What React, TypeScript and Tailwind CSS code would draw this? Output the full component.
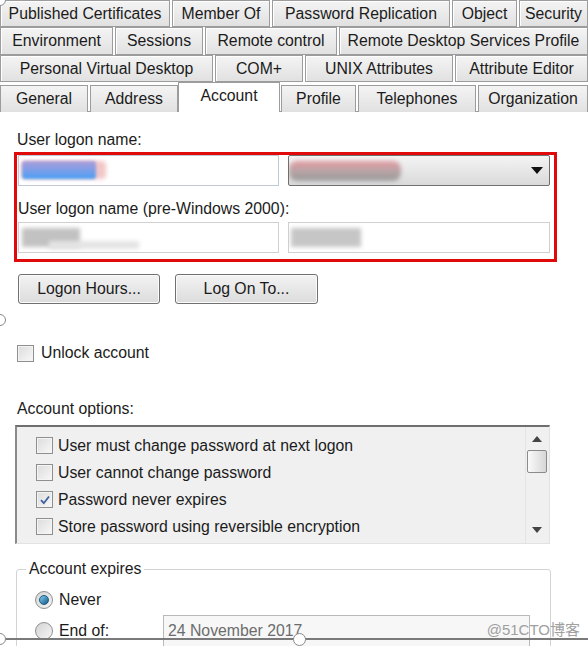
const font = { fontFamily: '"Liberation Sans", Arial, "Noto Sans CJK SC", sans-serif' };

const tabRows = [
  [
    { label: "Published Certificates", w: "w-[170px]" },
    { label: "Member Of", w: "w-[98px]" },
    { label: "Password Replication", w: "w-[178px]" },
    { label: "Object", w: "w-[65px]" },
    { label: "Security", w: "flex-1" },
  ],
  [
    { label: "Environment", w: "w-[113px]" },
    { label: "Sessions", w: "w-[88px]" },
    { label: "Remote control", w: "w-[132px]" },
    { label: "Remote Desktop Services Profile", w: "flex-1" },
  ],
  [
    { label: "Personal Virtual Desktop", w: "w-[213px]" },
    { label: "COM+", w: "w-[88px]" },
    { label: "UNIX Attributes", w: "w-[148px]" },
    { label: "Attribute Editor", w: "flex-1" },
  ],
];

const options = [
  { label: "User must change password at next logon", checked: false },
  { label: "User cannot change password", checked: false },
  { label: "Password never expires", checked: true },
  { label: "Store password using reversible encryption", checked: false },
];

function Tab({ label, w }: { label: string; w: string }) {
  return (
    <div
      className={`${w} flex h-full items-center justify-center border border-[#9c9c9c] bg-linear-to-b from-[#f4f4f4] to-[#e1e1e1] text-[15.8px] text-[#1b1b1b] whitespace-nowrap shadow-[inset_1px_1px_0_#ffffff]`}
    >
      {label}
    </div>
  );
}

function Checkbox({ checked }: { checked?: boolean }) {
  return (
    <div className="flex size-[17px] shrink-0 items-center justify-center border border-[#8e8f8f] bg-linear-to-br from-[#dcdcdc] to-[#f8f8f8] shadow-[inset_0_0_0_1px_#f4f4f4]">
      {checked && (
        <svg width="12" height="12" viewBox="0 0 12 12">
          <path d="M2 6.2 L4.8 9.2 L10 2.5" fill="none" stroke="#3c5fa0" strokeWidth="1.8" />
        </svg>
      )}
    </div>
  );
}

function Radio({ checked }: { checked?: boolean }) {
  return (
    <div className="flex size-[18px] shrink-0 items-center justify-center rounded-full border border-[#8e8f8f] bg-linear-to-br from-[#d4d4d4] to-[#f6f6f6]">
      {checked && (
        <div className="size-[10px] rounded-full border border-[#1d5a80] bg-linear-to-br from-[#7fd0f0] to-[#11598a]" />
      )}
    </div>
  );
}

function Button({ label, w }: { label: string; w: string }) {
  return (
    <div
      className={`${w} flex h-[30px] items-center justify-center rounded-[3px] border border-[#707070] bg-linear-to-b from-[#f3f3f3] to-[#dcdcdc] text-[15.8px] text-[#1b1b1b] shadow-[inset_0_0_0_1px_#fbfbfb]`}
    >
      {label}
    </div>
  );
}

export default function App() {
  return (
    <div className="relative h-[646px] w-[588px] overflow-hidden bg-white text-[#1b1b1b]" style={font}>
      {/* tab strip */}
      <div className="flex flex-col">
        {tabRows.map((row, i) => (
          <div key={i} className={`flex gap-[2px] ${i === 1 ? "h-[28px]" : "h-[27px]"}`}>
            {row.map((t) => (
              <Tab key={t.label} label={t.label} w={t.w} />
            ))}
          </div>
        ))}
        <div className="relative z-10 -mb-px flex h-[30px] items-end text-[15.8px]">
          <div className="h-[27px] w-[88px] border border-b-0 border-[#9c9c9c] bg-linear-to-b from-[#f4f4f4] to-[#e1e1e1] text-center leading-[25px]">
            General
          </div>
          <div className="ml-[2px] h-[27px] w-[88px] border border-b-0 border-[#9c9c9c] bg-linear-to-b from-[#f4f4f4] to-[#e1e1e1] text-center leading-[25px]">
            Address
          </div>
          <div className="h-[30px] w-[102px] border border-b-0 border-[#9c9c9c] bg-white pt-[2px] text-center leading-[22px]">
            Account
          </div>
          <div className="ml-px h-[27px] w-[75px] border border-b-0 border-[#9c9c9c] bg-linear-to-b from-[#f4f4f4] to-[#e1e1e1] text-center leading-[25px]">
            Profile
          </div>
          <div className="ml-[2px] h-[27px] w-[118px] border border-b-0 border-[#9c9c9c] bg-linear-to-b from-[#f4f4f4] to-[#e1e1e1] text-center leading-[25px]">
            Telephones
          </div>
          <div className="ml-[2px] h-[27px] flex-1 border border-b-0 border-[#9c9c9c] bg-linear-to-b from-[#f4f4f4] to-[#e1e1e1] text-center leading-[25px]">
            Organization
          </div>
        </div>
      </div>

      {/* panel */}
      <div className="border-t border-[#9c9c9c] pt-[19px] text-[15.8px] leading-[18px]">
        <div className="pl-[17px]">User logon name:</div>

        <div className="ml-[14px] mt-[3px] w-[543px] border-[3px] border-[#e00a0a] pb-[6px] pl-px pr-[4px]">
          <div className="flex gap-[9px]">
            <div className="relative h-[31px] w-[261px] overflow-hidden border border-[#bfcad6] bg-white">
              <div className="absolute left-[2px] top-[5px] h-[18px] w-[85px] rounded-[4px] bg-[#f2c6c8] blur-[2px]" />
              <div className="absolute left-[3px] top-[5px] h-[18px] w-[74px] rounded-[3px] bg-linear-to-b from-[#a99bd8] to-[#3f9ef6] blur-[1.5px]" />
            </div>
            <div className="relative flex h-[31px] flex-1 items-center justify-end overflow-hidden rounded-[2px] border border-[#707070] bg-linear-to-b from-[#f4f4f4] to-[#dadada] pr-[6px]">
              <div className="absolute left-0 top-[5px] h-[20px] w-[112px] rounded-[8px] bg-linear-to-b from-[#e59aa2] via-[#b8a4a6] to-[#9a9a9a] blur-[2px]" />
              <svg width="12" height="8" viewBox="0 0 12 8">
                <path d="M0 0 H12 L6 7 Z" fill="#111" />
              </svg>
            </div>
          </div>
          <div className="mt-[14px]">User logon name (pre-Windows 2000):</div>
          <div className="mt-[4px] flex gap-[9px]">
            <div className="relative h-[31px] w-[261px] overflow-hidden border border-[#d0d0d0] bg-white">
              <div className="absolute left-[3px] top-[5px] h-[19px] w-[58px] bg-[#c2c2c2] blur-[2px]" />
              <div className="absolute left-[30px] top-[18px] h-[8px] w-[90px] bg-[#e4e4e4] blur-[2px]" />
            </div>
            <div className="relative h-[31px] flex-1 overflow-hidden border border-[#d0d0d0] bg-white">
              <div className="absolute left-[2px] top-[5px] h-[19px] w-[70px] bg-[#c6c6c6] blur-[2px]" />
            </div>
          </div>
        </div>

        <div className="ml-[18px] mt-[12px] flex gap-[15px]">
          <Button label="Logon Hours..." w="w-[142px]" />
          <Button label="Log On To..." w="w-[143px]" />
        </div>

        <div className="ml-[17px] mt-[40px] flex items-center gap-[7px]">
          <Checkbox />
          <span>Unlock account</span>
        </div>

        <div className="ml-[17px] mt-[38px]">Account options:</div>

        <div className="ml-[15px] mt-[7px] flex h-[119px] w-[535px] border-l-2 border-t-2 border-r border-b border-l-[#8a8a8a] border-t-[#6f6f6f] border-r-[#e2e2e2] border-b-[#e2e2e2] bg-[#f0f0f0]">
          <div className="flex flex-1 flex-col pl-[19px] pt-[5px]">
            {options.map((o) => (
              <div key={o.label} className="flex h-[27px] items-center gap-[5px]">
                <Checkbox checked={o.checked} />
                <span>{o.label}</span>
              </div>
            ))}
          </div>
          <div className="mr-px flex w-[23px] flex-col items-center border-l border-[#e4e4e4] pt-[9px]">
            <svg width="10" height="6" viewBox="0 0 10 6">
              <path d="M0 6 L5 0 L10 6 Z" fill="#444" />
            </svg>
            <div className="mt-[8px] h-[23px] w-[20px] rounded-[2px] border border-[#8a8a8a] bg-linear-to-r from-[#fafafa] to-[#d6d6d6]" />
            <div className="flex-1" />
            <svg className="mb-[10px]" width="10" height="6" viewBox="0 0 10 6">
              <path d="M0 0 H10 L5 6 Z" fill="#444" />
            </svg>
          </div>
        </div>

        <fieldset className="ml-[16px] mt-[16px] w-[535px] rounded-[3px] border border-[#d3d3d3] pb-[20px] pl-[18px]">
          <legend className="-ml-[9px] bg-white px-[3px]">Account expires</legend>
          <div className="mt-[13px] flex items-center gap-[6px]">
            <Radio checked />
            <span>Never</span>
          </div>
          <div className="mt-[6px] flex items-center">
            <Radio />
            <span className="ml-[6px] w-[104px]">End of:</span>
            <div className="flex h-[32px] w-[367px] items-center border border-[#b9b9b9] bg-[#f7f7f7] pl-[4px] text-[#6c6c6c]">
              24 November 2017
            </div>
          </div>
        </fieldset>
      </div>

      {/* screenshot frame artefacts */}
      <div className="absolute left-0 top-[638px] h-[2px] w-full bg-[#7a7a7a]" />
      <div className="absolute -left-[6px] -top-[6px] size-[12px] rounded-full border border-[#8a8a8a] bg-white" />
      <div className="absolute -left-[6px] top-[314px] size-[12px] rounded-full border border-[#8a8a8a] bg-white" />
      <div className="absolute -left-[6px] top-[633px] size-[12px] rounded-full border border-[#8a8a8a] bg-white" />
      <div className="absolute left-[293px] top-[633px] size-[13px] rounded-full border border-[#8a8a8a] bg-white" />
      <div
        className="absolute right-[8px] top-[620px] text-[15px] leading-[20px] text-[#a0a0a0]"
        style={{ fontFamily: '"Liberation Sans", "Noto Sans CJK SC", sans-serif' }}
      >
        @51CTO博客
      </div>
    </div>
  );
}
